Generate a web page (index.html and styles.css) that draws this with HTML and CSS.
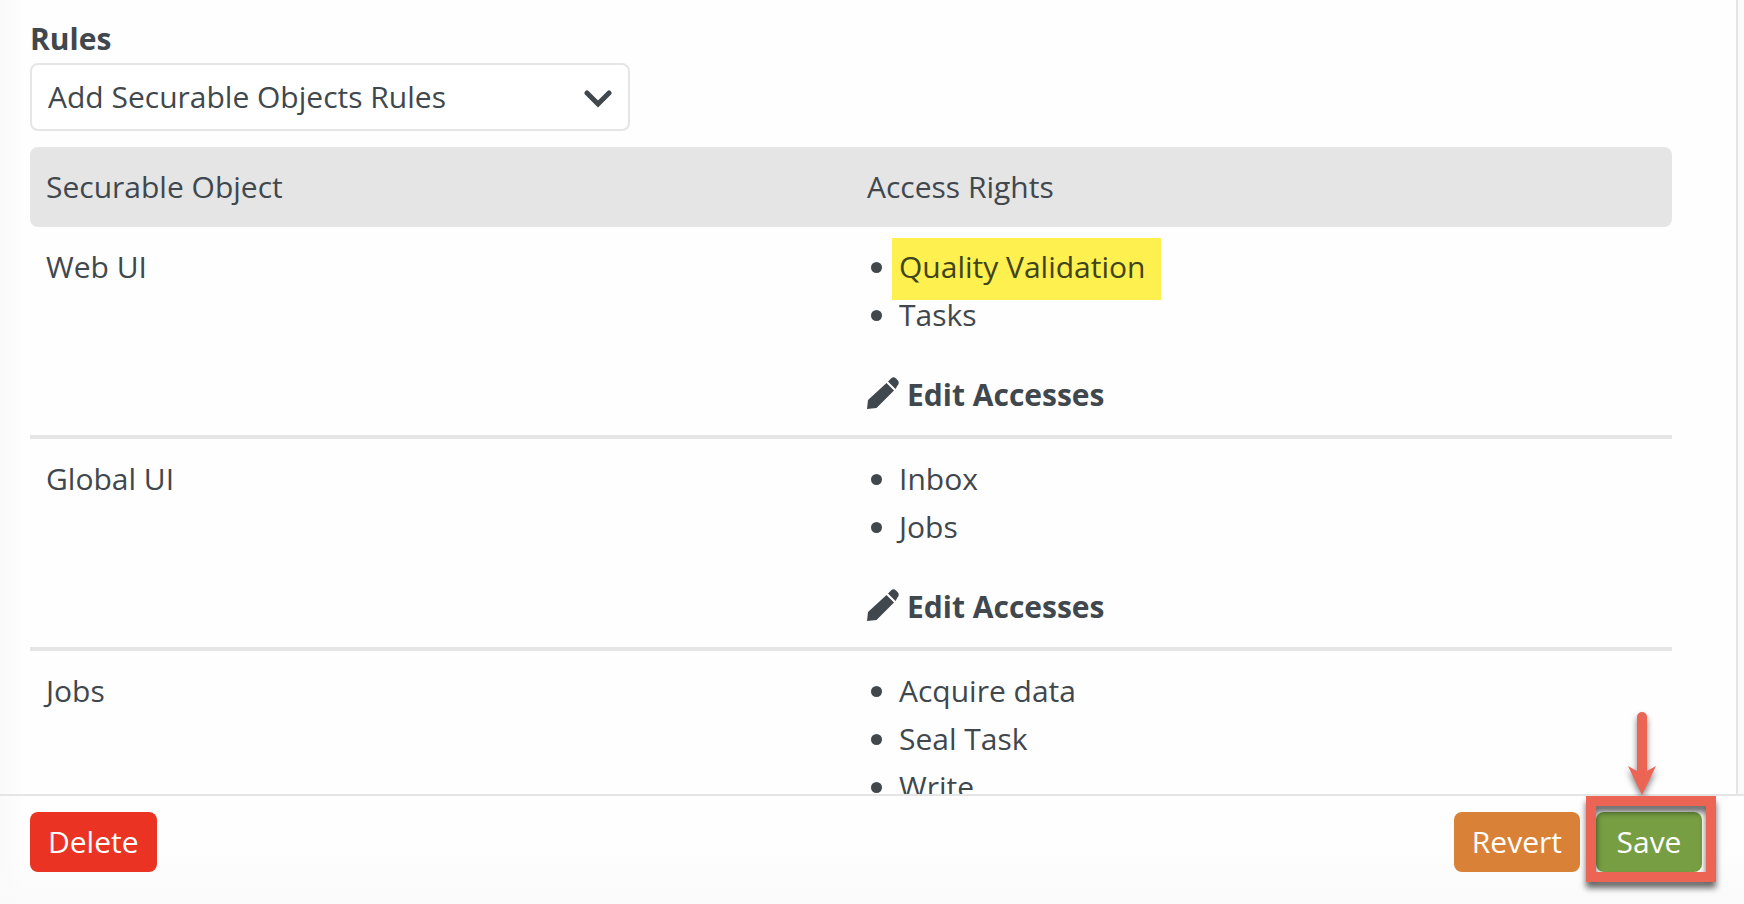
FILE: index.html
```html
<!doctype html>
<html lang="en">
<head>
  <meta charset="UTF-8">
  <meta name="viewport" content="width=device-width, initial-scale=1.0">
  <title>Securable Objects Rules</title>
  <link rel="stylesheet" href="styles.css">
</head>
<body>
  <main class="content">
    <label class="rules-label" for="rules">Rules</label>
    <div class="select-wrap">
      <select id="rules">
        <option>Add Securable Objects Rules</option>
      </select>
      <svg class="chevron" viewBox="0 0 28 18" aria-hidden="true">
        <path d="M3 3l11 11L25 3"/>
      </svg>
    </div>
    <table>
      <thead>
        <tr>
          <th>Securable Object</th>
          <th>Access Rights</th>
        </tr>
      </thead>
      <tbody>
        <tr>
          <td>Web UI</td>
          <td>
            <ul>
              <li><mark>Quality Validation</mark></li>
              <li>Tasks</li>
            </ul>
            <a class="edit" href="#"><svg viewBox="0 0 32 32" aria-hidden="true"><path d="M19.500 6l7.500 7.500L9.500 31 0 32l1-9zM21 4.500l3-3q2.500-2.500 5 0l1.500 1.500q2.500 2.500 0 5.500l-2 3.500z"/></svg>Edit Accesses</a>
          </td>
        </tr>
        <tr>
          <td>Global UI</td>
          <td>
            <ul>
              <li>Inbox</li>
              <li>Jobs</li>
            </ul>
            <a class="edit" href="#"><svg viewBox="0 0 32 32" aria-hidden="true"><path d="M19.500 6l7.500 7.500L9.500 31 0 32l1-9zM21 4.500l3-3q2.500-2.500 5 0l1.500 1.500q2.500 2.500 0 5.500l-2 3.500z"/></svg>Edit Accesses</a>
          </td>
        </tr>
        <tr>
          <td>Jobs</td>
          <td>
            <ul>
              <li>Acquire data</li>
              <li>Seal Task</li>
              <li>Write</li>
            </ul>
          </td>
        </tr>
      </tbody>
    </table>
  </main>
  <footer>
    <button class="delete">Delete</button>
    <button class="revert">Revert</button>
    <div class="callout">
      <button class="save">Save</button>
      <svg class="arrow" viewBox="0 0 30 84" aria-hidden="true">
        <path d="M10 5a5 5 0 0 1 10 0v54l9-5-14 29L1 54l9 5z"/>
      </svg>
    </div>
  </footer>
</body>
</html>
```

FILE: styles.css
```css
* {
    box-sizing: border-box;
}
body {
    margin: 0;
    height: 100vh;
    display: flex;
    flex-direction: column;
    font-family: "Open Sans", sans-serif;
    font-size: 30px;
    line-height: 48px;
    color: #40474d;
    background: linear-gradient(to right, #fafafa, #fefefe 24px);
}
.content {
    flex: 1;
    min-height: 0;
    overflow: hidden;
    margin-right: 6px;
    padding: 15px 64px 0 30px;
    border-right: 2px solid #e5e5e5;
    box-shadow: 6px 0 #fafafa;
}
.rules-label {
    display: block;
    font-weight: bold;
}
.select-wrap {
    position: relative;
    width: 600px;
    max-width: 100%;
    margin-bottom: 16px;
}
select {
    appearance: none;
    display: block;
    width: 100%;
    height: 68px;
    padding: 0 16px;
    font: inherit;
    color: inherit;
    background: white;
    border: 2px solid #e5e5e5;
    border-radius: 8px;
}
.chevron {
    position: absolute;
    right: 18px;
    top: 27px;
    width: 28px;
    height: 18px;
    fill: none;
    stroke: #40474d;
    stroke-width: 5;
    stroke-linecap: round;
    pointer-events: none;
}
table {
    width: 100%;
    table-layout: fixed;
    border-spacing: 0;
}
th, td {
    padding: 16px;
    text-align: left;
    vertical-align: top;
}
th {
    font-weight: normal;
    background-color: #e5e5e5;
}
th:first-child {
    border-radius: 8px 0 0 8px;
}
th:last-child {
    border-radius: 0 8px 8px 0;
}
td {
    border-bottom: 4px solid #e5e5e5;
}
ul {
    margin: 0 0 32px;
    padding-left: 32px;
}
mark {
    position: relative;
    color: #40431b;
    background: none;
}
mark::before {
    content: "";
    position: absolute;
    z-index: -1;
    inset: -8px -15px -13px -7px;
    background-color: #fdf04f;
}
.edit {
    display: flex;
    align-items: center;
    gap: 8px;
    font-weight: bold;
    color: inherit;
    text-decoration: none;
}
.edit svg {
    width: 32px;
    height: 32px;
    margin-bottom: 4px;
    fill: #40474d;
}
footer {
    display: flex;
    gap: 16px;
    padding: 16px 42px 32px 30px;
    border-top: 2px solid #e5e5e5;
    background: linear-gradient(to bottom, transparent 50%, #fafafa);
}
button {
    min-width: 106px;
    padding: 6px 18px;
    font: inherit;
    color: white;
    border: none;
    border-radius: 8px;
    cursor: pointer;
}
.delete {
    margin-right: auto;
    background-color: #ea3323;
}
.revert {
    background-color: #d98237;
}
.save {
    background-color: #779e43;
}
.callout {
    position: relative;
}
/* frame and arrow around the Save button */
.callout::after {
    content: "";
    position: absolute;
    inset: -16px -14px -10px -10px;
    border: 10px solid #ec6453;
    filter: drop-shadow(0 6px 3px rgba(0, 0, 0, 0.6));
    pointer-events: none;
}
.arrow {
    position: absolute;
    left: 31px;
    bottom: 76px;
    width: 30px;
    height: 84px;
    fill: #ec6453;
    filter: drop-shadow(0 4px 3px rgba(0, 0, 0, 0.5));
}
```
